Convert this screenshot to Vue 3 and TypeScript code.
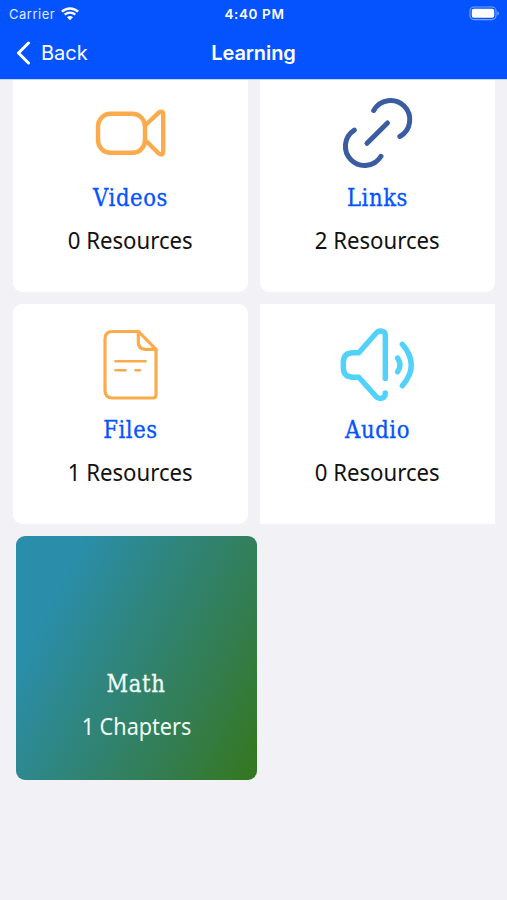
<script setup lang="ts">
type IconName = 'video' | 'link' | 'file' | 'audio'

interface Resource {
  icon: IconName
  title: string
  count: number
  square?: boolean
}

const resources: Resource[] = [
  { icon: 'video', title: 'Videos', count: 0 },
  { icon: 'link', title: 'Links', count: 2 },
  { icon: 'file', title: 'Files', count: 1 },
  { icon: 'audio', title: 'Audio', count: 0, square: true },
]

const chapters = [{ title: 'Math', count: 1 }]
</script>

<template>
  <div class="screen">
    <header class="header">
      <div class="status">
        <div class="carrier">
          <span class="carrier-name">Carrier</span>
          <svg class="wifi" viewBox="0 0 18 14" width="18" height="14">
            <path d="M.9 4.7C5.6.4 12.4.4 17.1 4.7" />
            <path d="M3.7 7.7C6.7 5 11.3 5 14.3 7.7" />
            <path class="dot" d="M9 13.2 6 10.3C7.8 8.7 10.2 8.7 12 10.3Z" />
          </svg>
        </div>
        <span class="time">4:40 PM</span>
        <svg class="battery" viewBox="0 0 31 15" width="31" height="15">
          <rect class="shell" x="1" y="1" width="26" height="12.6" rx="4" />
          <rect class="level" x="2.8" y="2.8" width="22.4" height="9" rx="2" />
          <path class="cap" d="M28.4 5.2Q30 6 30 7.3T28.4 9.4Z" />
        </svg>
      </div>
      <nav class="nav">
        <div class="back">
          <svg viewBox="0 0 16 24" width="16" height="24"><path d="M13.5 2 3.5 12 13.5 22" /></svg>
          <span class="back-label">Back</span>
        </div>
        <h1>Learning</h1>
      </nav>
    </header>

    <main class="content">
      <section class="resources">
        <article v-for="r in resources" :key="r.title" class="card" :class="{ square: r.square }">
          <svg v-if="r.icon === 'video'" class="icon video" viewBox="91 93 80 80">
            <rect x="98" y="113.8" width="47" height="39" rx="12.5" />
            <path d="M145 125.5 158.5 112.8Q163.2 109.8 163.2 115V151Q163.2 156.5 158.5 153.3L145 140" />
          </svg>
          <svg v-else-if="r.icon === 'link'" class="icon link" viewBox="338.5 92.5 80 80">
            <path d="M374.2 110A19.2 19.2 0 1 1 400.3 136" />
            <path d="M354.8 129.6A19.2 19.2 0 1 0 381.5 155.8" />
            <path d="M367.5 142.8 388 122.4" />
          </svg>
          <svg v-else-if="r.icon === 'file'" class="icon file" viewBox="91 325 80 80">
            <path d="M138.5 331.5H112.5Q105 331.5 105 339V390.5Q105 398 112.5 398H153Q156 398 156 395V349.3Z" />
            <path d="M138.3 331.7V342Q138.3 349.3 145.5 349.3H156" />
            <path class="thin" d="M115.5 361.3H145.5M115.5 370.3H125.5M135.5 370.3H140" />
          </svg>
          <svg v-else class="icon audio" viewBox="338.2 325 80 80">
            <path d="M385.5 378.5V335.5C385.5 330.5 379.5 329.5 376 333.5L359 352.7H353.5Q343.5 352.7 343.5 362.5V367.5Q343.5 377.2 353.5 377.2H359L376 396.3C379.5 400.5 385.5 398.5 385.5 393" />
            <path d="M402.5 344.3Q420.5 365 402.5 385.8" />
            <path d="M397.8 358Q402.5 365 397.8 371.8" />
          </svg>
          <h2>{{ r.title }}</h2>
          <p>{{ r.count }} Resources</p>
        </article>
      </section>

      <section class="chapters">
        <article v-for="c in chapters" :key="c.title" class="chapter">
          <h2>{{ c.title }}</h2>
          <p>{{ c.count }} Chapters</p>
        </article>
      </section>
    </main>
  </div>
</template>

<style>
body {
  background: #f1f1f6;
}
</style>

<style scoped>
.screen {
  height: 900px;
  overflow: hidden;
  background: #f1f1f6;
  font-family: Inter, 'Liberation Sans', sans-serif;
}
.header {
  box-sizing: border-box;
  height: 79px;
  color: #fff;
  background: #0453ff;
  box-shadow: 0 1px 0 #b9d7ff;
  position: relative;
}
.status {
  display: grid;
  grid-template-columns: 1fr auto 1fr;
  align-items: center;
  height: 27px;
  padding: 0 7px 0 9px;
  font-size: 13px;
}
.carrier {
  display: flex;
  align-items: center;
  gap: 6px;
}
.carrier-name {
  opacity: 0.88;
  letter-spacing: 0.5px;
}
.wifi {
  fill: none;
  stroke: #fff;
  stroke-width: 2.3;
}
.wifi .dot {
  fill: #fff;
  stroke: none;
}
.time {
  font-size: 13.5px;
  font-weight: 600;
  letter-spacing: 0.6px;
}
.battery {
  justify-self: end;
}
.shell {
  fill: none;
  stroke: #79a5ff;
  stroke-width: 1.1;
}
.level {
  fill: #fff;
}
.cap {
  fill: #79a5ff;
}
.nav {
  display: grid;
  grid-template-columns: 1fr auto 1fr;
  align-items: center;
  height: 51px;
  padding: 0 15px;
}
.back {
  display: flex;
  align-items: center;
  gap: 10px;
  font-size: 20px;
}
.back svg {
  fill: none;
  stroke: #fff;
  stroke-width: 3;
  stroke-linecap: round;
  stroke-linejoin: round;
}
h1 {
  margin: 0;
  font-size: 20px;
  font-weight: 600;
  letter-spacing: -0.1px;
}
.content {
  margin-top: -7px;
}
.resources {
  display: grid;
  grid-template-columns: 235px 235px;
  gap: 12px;
  padding-left: 13px;
}
.card {
  box-sizing: border-box;
  height: 220px;
  padding-top: 21px;
  display: flex;
  flex-direction: column;
  align-items: center;
  background: #fff;
  border-radius: 9px;
}
.card.square {
  border-radius: 0;
}
.icon {
  width: 80px;
  height: 80px;
  fill: none;
  stroke-linecap: round;
  stroke-linejoin: round;
}
.video {
  stroke: #fbab4c;
  stroke-width: 4.4;
}
.link {
  stroke: #3a5da2;
  stroke-width: 5;
}
.file {
  stroke: #fbab4c;
  stroke-width: 3.2;
}
.file .thin {
  stroke-width: 2.6;
}
.audio {
  stroke: #50d2fb;
  stroke-width: 5.4;
}
h2 {
  margin: 9px 0 0;
  font-family: 'DejaVu Serif Condensed', 'DejaVu Serif', serif;
  font-stretch: condensed;
  font-size: 23.5px;
  font-weight: 400;
  letter-spacing: 0.6px;
  line-height: 32px;
  color: #0453ff;
  -webkit-text-stroke: 0.3px currentColor;
}
p {
  margin: 10px 0 0;
  font-family: 'Noto Sans', sans-serif;
  font-size: 23.5px;
  line-height: 32px;
  color: #111;
  transform: scaleX(0.943);
}
.chapters {
  padding: 12px 0 0 15.5px;
}
.chapter {
  box-sizing: border-box;
  width: 241px;
  height: 244px;
  padding-top: 123px;
  border-radius: 9px;
  text-align: center;
  background: linear-gradient(117deg, #2a8eab 0%, #2a8eab 18%, #2f8680 43%, #337d52 72%, #347824 96%);
}
.chapter h2,
.chapter p {
  color: #effaf5;
}
.chapter p {
  transform: scaleX(0.92);
}
</style>
